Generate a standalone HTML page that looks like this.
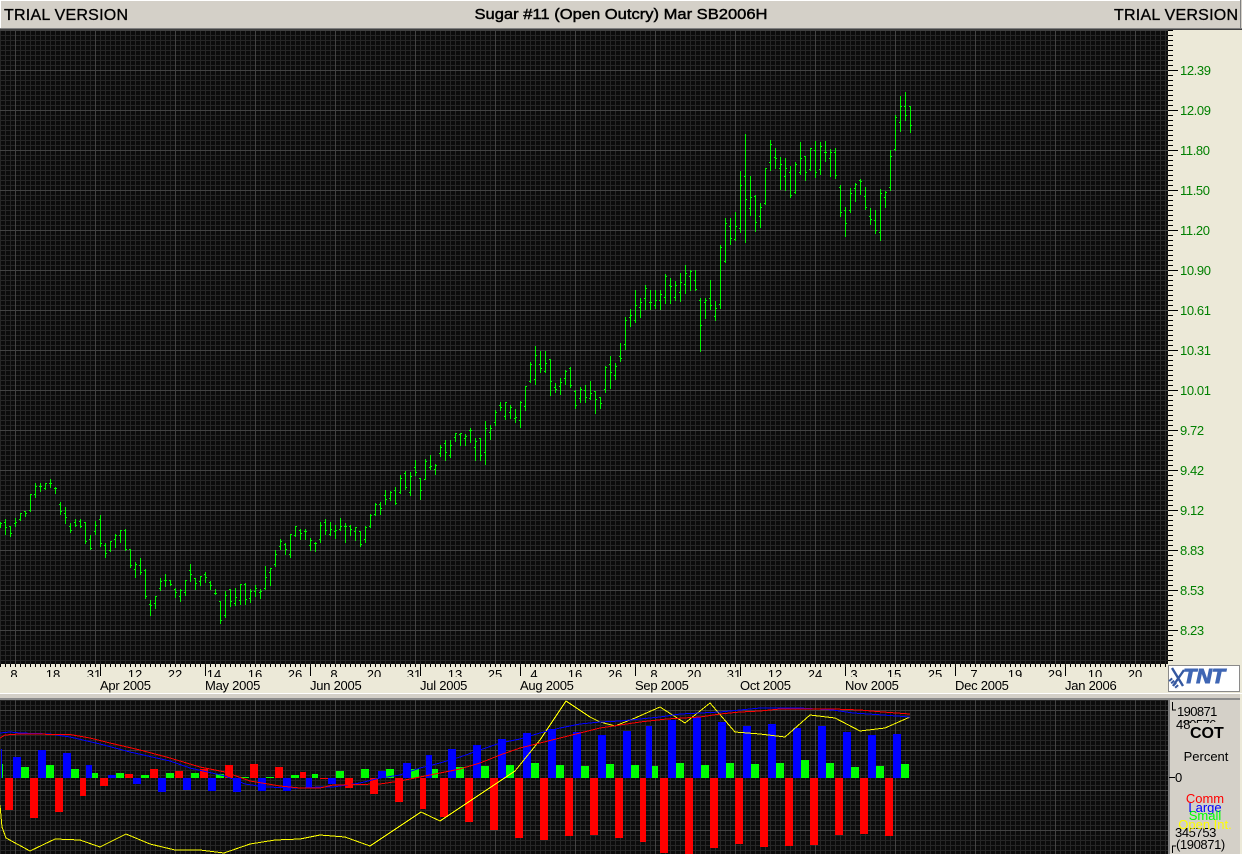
<!DOCTYPE html>
<html><head><meta charset="utf-8"><style>
html,body{margin:0;padding:0;background:#ece9d8;width:1242px;height:854px;overflow:hidden}
svg{position:absolute;left:0;top:0;display:block}
text{font-family:"Liberation Sans",Arial,sans-serif}
</style></head><body>
<svg xmlns="http://www.w3.org/2000/svg" width="1242" height="854" viewBox="0 0 1242 854">
<defs>
<pattern id="g" width="80" height="40" patternUnits="userSpaceOnUse" x="15" y="30">
<rect width="80" height="40" fill="#0c0c0c"/>
<path shape-rendering="crispEdges" stroke="#272727" stroke-width="1" fill="none" d="M5.5 0V40M10.5 0V40M15.5 0V40M20.5 0V40M25.5 0V40M30.5 0V40M35.5 0V40M40.5 0V40M45.5 0V40M50.5 0V40M55.5 0V40M60.5 0V40M65.5 0V40M70.5 0V40M75.5 0V40M0 5.5H80M0 10.5H80M0 15.5H80M0 20.5H80M0 25.5H80M0 30.5H80M0 35.5H80"/>
<path shape-rendering="crispEdges" stroke="#424242" stroke-width="1" fill="none" d="M0.5 0V40M0 0.5H80"/>
</pattern>
<clipPath id="cl"><rect x="0" y="664" width="1168" height="13"/></clipPath>
<clipPath id="c2"><rect x="1170" y="700" width="72" height="23"/></clipPath>
<clipPath id="cb"><rect x="0" y="700" width="1168" height="154"/></clipPath>
</defs>
<rect width="1242" height="854" fill="#ece9d8"/>
<!-- title bar -->
<rect x="0" y="0" width="1242" height="29" fill="#d4d0c8"/>
<path shape-rendering="crispEdges" stroke="#fff" fill="none" d="M0.5 28V0.5H1241"/>
<path shape-rendering="crispEdges" stroke="#808080" fill="none" d="M0 28.5H1242M1240.5 0V29"/>
<rect x="0" y="29" width="1242" height="1" fill="#404040"/>
<text x="4" y="20" font-size="16" fill="#000" stroke="#000" stroke-width=".3" textLength="124">TRIAL VERSION</text>
<text x="621" y="19" font-size="15" fill="#000" stroke="#000" stroke-width=".45" text-anchor="middle" textLength="293" lengthAdjust="spacingAndGlyphs">Sugar #11 (Open Outcry) Mar SB2006H</text>
<text x="1114" y="20" font-size="16" fill="#000" stroke="#000" stroke-width=".3" textLength="124">TRIAL VERSION</text>
<!-- main chart -->
<rect x="0" y="30" width="1168" height="634" fill="url(#g)"/>
<path id="bars" shape-rendering="crispEdges" stroke="#00f800" stroke-width="1" fill="none"/>
<!-- price axis -->
<path id="yt" shape-rendering="crispEdges" stroke="#000" stroke-width="1" fill="none"/>
<g font-size="13" fill="#008000" letter-spacing="-.4">
<text x="1180" y="75">12.39</text><text x="1180" y="115">12.09</text><text x="1180" y="155">11.80</text><text x="1180" y="195">11.50</text><text x="1180" y="235">11.20</text><text x="1180" y="275">10.90</text><text x="1180" y="315">10.61</text><text x="1180" y="355">10.31</text><text x="1180" y="395">10.01</text><text x="1180" y="435">9.72</text><text x="1180" y="475">9.42</text><text x="1180" y="515">9.12</text><text x="1180" y="555">8.83</text><text x="1180" y="595">8.53</text><text x="1180" y="635">8.23</text>
</g>
<!-- time axis -->
<path id="xt" shape-rendering="crispEdges" stroke="#000" stroke-width="1" fill="none"/>
<g font-size="13" fill="#000" text-anchor="middle" clip-path="url(#cl)">
<text x="14" y="679">8</text><text x="53" y="679">18</text><text x="94" y="679">31</text><text x="135" y="679">12</text><text x="175" y="679">22</text><text x="214" y="679">14</text><text x="255" y="679">16</text><text x="295" y="679">26</text><text x="334" y="679">8</text><text x="374" y="679">20</text><text x="414" y="679">31</text><text x="455" y="679">13</text><text x="495" y="679">25</text><text x="534" y="679">4</text><text x="575" y="679">16</text><text x="615" y="679">26</text><text x="654" y="679">8</text><text x="694" y="679">20</text><text x="734" y="679">31</text><text x="775" y="679">12</text><text x="815" y="679">24</text><text x="854" y="679">3</text><text x="894" y="679">15</text><text x="935" y="679">25</text><text x="974" y="679">7</text><text x="1015" y="679">19</text><text x="1055" y="679">29</text><text x="1095" y="679">10</text><text x="1135" y="679">20</text>
</g>
<g font-size="13" fill="#000" letter-spacing="-.25">
<text x="100" y="690">Apr 2005</text><text x="205" y="690">May 2005</text><text x="310" y="690">Jun 2005</text><text x="420" y="690">Jul 2005</text><text x="520" y="690">Aug 2005</text><text x="635" y="690">Sep 2005</text><text x="740" y="690">Oct 2005</text><text x="845" y="690">Nov 2005</text><text x="955" y="690">Dec 2005</text><text x="1065" y="690">Jan 2006</text>
</g>
<!-- TNT logo -->
<rect x="1168.5" y="665.5" width="71" height="26" fill="#fff" stroke="#8a8a8a"/>
<g fill="none" stroke="#3558a0" stroke-width="2.4"><path d="M1172 668L1183 686M1184 670L1173 686"/><path d="M1170 679L1178 688" stroke-width="4" stroke-dasharray="2 1"/></g>
<text x="1183" y="683" font-size="20" font-weight="bold" font-style="italic" fill="#3f66b4" stroke="#3f66b4" stroke-width="1" textLength="42" lengthAdjust="spacingAndGlyphs">TNT</text>
<!-- separator -->
<rect x="0" y="693" width="1242" height="1" fill="#fff"/>
<rect x="0" y="694" width="1242" height="6" fill="#d4d0c8"/>
<rect x="0" y="698" width="1242" height="2" fill="#8c8c8c"/>
<rect x="1240" y="694" width="2" height="160" fill="#ece9d8"/>
<!-- lower panel -->
<rect x="0" y="700" width="1168" height="154" fill="url(#g)"/>
<g clip-path="url(#cb)">
<path id="red" fill="#ff0000"/><path id="blue" fill="#0000ff"/><path id="green" fill="#00ff00"/>
<polyline shape-rendering="crispEdges" fill="none" stroke="#ffff00" stroke-width="1" points="0,805 2,827 6,838 30,851 55,839 80,840 100,847 126,834 150,844 175,850 200,850 224,853 250,844 275,840 300,839 320,835 345,837 370,846 421,812 440,821 515,771 540,740 566,701 590,717 600,722 615,726 635,718 660,707 685,723 710,703 735,732 760,734 785,737 810,715 835,718 860,731 885,728 910,717"/>
<polyline shape-rendering="crispEdges" fill="none" stroke="#0000ff" stroke-width="1" points="0,733 10,732 20,733 50,734 70,737 100,744 130,752 170,761 190,768 225,776 245,784 265,787 300,788 320,787 333,787 360,783 380,778 400,775 420,768 440,763 460,757 480,750 500,743 520,739 540,733 560,728 580,724 600,722 620,721 640,719 660,717 680,714 700,713 720,712 740,710 760,708 800,708 833,710 853,713 883,715 910,717"/>
<polyline shape-rendering="crispEdges" fill="none" stroke="#ff0000" stroke-width="1" points="0,738 5,735 20,734 70,734.500 90,738 110,743 140,750 170,758 200,767 225,772 250,781 280,786 300,788 320,788 333,785 380,784 400,781 420,777 440,773 460,769 480,763 500,755 520,748 540,743 560,738 580,733 600,728 620,725 640,722 667,719 700,717 720,714 740,712 760,711 780,709 800,709 833,709 860,710 883,712 910,714"/>
</g>
<!-- lower right legend -->
<rect x="1168" y="700" width="2" height="154" fill="#808080"/>
<rect x="1170" y="700" width="70" height="154" fill="#d4d0c8"/>
<path shape-rendering="crispEdges" stroke="#000" fill="none" d="M1172.500 702V710H1176M1169 777.500H1175M1172.500 853V846H1176"/>
<g font-size="13" fill="#000">
<text x="1177" y="716" letter-spacing="-.6">190871</text>
<text x="1176" y="729" letter-spacing="-.6" clip-path="url(#c2)">480576</text>
<text x="1176" y="729">48</text>
<text x="1190" y="738" font-size="16" font-weight="bold">COT</text>
<text x="1206" y="761" text-anchor="middle">Percent</text>
<text x="1175" y="782">0</text>
<text x="1175" y="837" letter-spacing="-.4">345753</text>
<text x="1176" y="849" letter-spacing="-.4">(190871)</text>
<text x="1205" y="803" text-anchor="middle" fill="#ff0000">Comm</text>
<text x="1205" y="812" text-anchor="middle" fill="#0000ff">Large</text>
<text x="1205" y="820" text-anchor="middle" fill="#00ff00">Small</text>
<text x="1205" y="829" text-anchor="middle" fill="#ffff00">Open Int.</text>
</g>
</svg>
<script>
(function(){
function $(i){return document.getElementById(i)}
var A=[155,170,158,160,148,192,158,172,168,197,168,190,145,167,160,157,130,150,147,130,124,137,124,130,72,122,122,72,40,80,73,48,40,63,48,50,40,57,55,40,28,50,40,40,50,68,55,55,97,132,103,124,110,160,130,142,160,186,168,182,148,168,157,165,148,171,154,169,156,220,156,214,196,237,208,235,153,193,184,166,136,228,148,220,220,261,226,250,213,243,241,214,193,231,208,196,181,216,196,181,178,240,181,237,238,291,238,285,277,320,298,284,265,311,286,308,298,383,300,380,390,435,404,406,378,414,400,379,324,359,356,333,313,347,331,331,331,345,331,344,354,381,358,367,358,393,379,362,331,375,367,331,282,333,301,314,325,357,325,341,318,345,334,319,306,336,313,322,334,357,336,346,358,371,370,370,393,458,393,452,363,440,437,376,357,407,358,394,354,404,400,382];
var B=[553,612,600,553,549,612,553,598,568,605,595,573,556,588,575,566,568,594,578,575,498,566,565,532,505,555,517,505,450,497,494,462,418,447,438,424,430,462,433,447,403,470,463,404,379,407,406,379,388,417,391,400,388,417,394,394,415,450,436,420,427,453,431,431,366,426,418,376,358,402,367,391,366,404,403,388,376,414,393,391,354,390,388,378,368,426,380,380,376,405,379,388,381,420,394,382,393,438,394,432,378,426,418,381,343,381,378,345,309,345,344,313,306,342,313,325,270,312,286,298,273,300,295,276,262,312,271,310,226,278,277,235,213,267,220,263,216,285,277,229,180,226,202,216,235,297,235,271,178,238,238,184,165,207,203,198,193,222,207,195,136,167,160,142,121,180,130,157,121,170,167,136,99,122,112,100,100,135,102,100,102,135,114,109,84,126,91,91,114,180,142,123,114,180,114,166,64,192,157,85,75,117,97,85,30,75,67,37];
var C=[456,480,466,471,456,507,499,457,465,504,487,471,477,516,505,502,453,531,511,456,408,480,469,408,336,396,394,343,288,402,388,316,303,366,343,355,303,366,364,340,327,435,328,394,399,426,411,418,384,432,408,397,360,402,385,363,351,411,355,407,421,474,424,466,411,456,445,418,405,456,421,442,393,447,445,430,423,489,424,448,441,474,442,460,348,426,418,351,318,414,343,367,339,387,376,349,279,333,319,325,201,297,283,211,177,228,202,196,120,216,211,166,144,201,172,156,105,177,145,115,120,177,156,156,120,174,166,151,120,177,151,133,72,159,142,79,84,159,106,108,93,150,142,106,69,153,127,96,45,129,103,70,60,120,78,63,60,120,91,118,144,303,151,226,144,204,156,150,90,177,145,166,153,210,199,175,-15,174,163,-9];
var D=[400,530,530,415,400,477,425,461,381,465,463,425,258,441,431,301,147,471,275,343,273,390,370,337,331,438,334,412,354,426,394,367,250,357,355,250,165,255,232,178,189,250,217,220,216,312,250,238,219,315,274,250,243,336,262,331,232,324,322,238,171,267,263,220,213,285,214,262,189,255,253,191,168,276,196,262,171,267,253,184,168,228,202,202,192,273,220,202,189,278,202,271,300,393,307,382,366,453,376,415,309,381,376,325,294,348,310,298,282,327,286,289,306,372,334,367,369,417,394,403,375,444,406,436,312,465,442,325,318,366,337,322,195,315,307,214,90,196,193,97,33,138,112,64,21,105,64,91,63,141,64,121];
var d='';
function add(a,x0,y0){for(var i=0;i<a.length;i+=4){var x=x0+(i/4)*5,
 h=Math.round(y0+a[i]/3),l=Math.round(y0+a[i+1]/3),o=Math.floor(y0+a[i+2]/3),c=Math.floor(y0+a[i+3]/3);
 d+='M'+(x+.5)+' '+h+'V'+(l+1);
 d+='M'+(x-1)+' '+(o+.5)+'h1M'+(x+1)+' '+(c+.5)+'h1';}}
add(A,0,470);add(B,240,400);add(C,500,250);add(D,725,85);
$('bars').setAttribute('d',d);
var y='',i;
for(i=30;i<664;i+=5){y+='M1168 '+(i+.5)+'h'+((i-30)%40==0&&i>30?10:5);}
$('yt').setAttribute('d',y);
var x='';
for(i=0;i<1168;i+=5){x+='M'+(i+.5)+' 664v3';}
[100,205,310,420,520,635,740,845,955,1065].forEach(function(m){x+='M'+(m+.5)+' 664v12';});
$('xt').setAttribute('d',x);
function rects(id,a){var s='';for(var i=0;i<a.length;i+=3){var X=a[i],W=a[i+1],Y=a[i+2],t=Math.min(Y,778),b=Math.max(Y,778);s+='M'+X+' '+t+'h'+W+'V'+b+'h-'+W+'z';}$(id).setAttribute('d',s);}
rects('red',[5,8,810,30,8,818,55,8,812,80,6,796,100,8,786,125,8,774,150,8,769,175,8,771,200,8,769,225,8,765,250,8,764,275,8,767,300,6,772,320,8,779,345,8,788,370,8,794,395,8,802,420,6,809,440,8,817,465,8,822,490,8,830,515,8,838,540,8,840,565,8,836,590,8,835,615,8,838,640,6,842,660,8,853,685,8,854,710,8,848,735,8,844,760,8,847,785,8,846,810,8,845,835,8,835,860,8,834,885,8,836]);
rects('blue',[1,1,749,13,8,757,38,8,750,63,8,753,86,6,765,108,8,775,133,8,784,158,8,792,183,8,790,208,8,791,233,8,792,258,8,791,283,8,791,306,6,787,328,8,784,378,8,771,403,8,763,426,6,755,448,8,749,473,8,745,498,8,739,523,8,733,548,8,729,573,8,732,598,8,735,623,8,731,646,6,726,668,8,720,693,8,717,718,8,722,743,8,726,768,8,724,793,8,728,818,8,726,843,8,732,868,8,735,893,8,734]);
rects('green',[2,1,764,21,8,767,46,8,765,71,8,769,92,6,773,116,8,773,141,8,775,166,8,773,191,8,773,216,8,774,241,8,777,266,8,777,291,8,775,312,6,774,336,8,771,361,8,769,386,8,769,411,8,769,432,6,769,456,8,767,481,8,766,506,8,765,531,8,763,556,8,765,581,8,766,606,8,764,631,8,765,652,6,766,676,8,763,701,8,765,726,8,763,751,8,764,776,8,763,801,8,760,826,8,763,851,8,767,876,8,766,901,8,764]);
})();
</script>
</body></html>
